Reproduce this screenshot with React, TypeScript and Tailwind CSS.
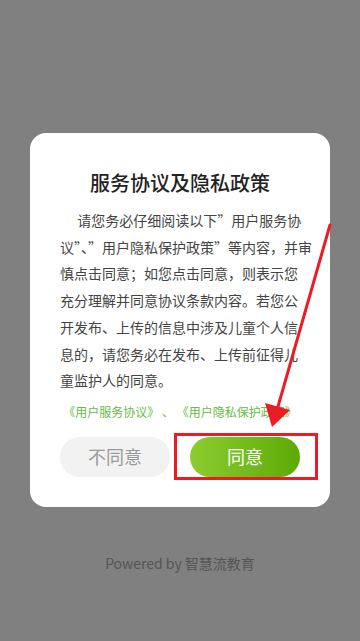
import React from 'react';

const LINES = [
  '\u3000 请您务必仔细阅读以下”用户服务协',
  '议”、”用户隐私保护政策”等内容，并审',
  '慎点击同意；如您点击同意，则表示您',
  '充分理解并同意协议条款内容。若您公',
  '开发布、上传的信息中涉及儿童个人信',
  '息的，请您务必在发布、上传前征得儿',
  '童监护人的同意。',
];

const App: React.FC = () => {
  return (
    <div
      className="relative w-[360px] h-[641px] bg-[#808080] overflow-hidden flex flex-col items-center pt-[133px]"
      style={{ fontFamily: '"Noto Sans CJK SC", "Noto Sans", sans-serif' }}
    >
      <div className="w-[300px] bg-white rounded-[16px] flex flex-col items-center pt-[36px] pb-[30px]">
        <h1 className="text-[20px] leading-[28px] font-medium text-[#222]">服务协议及隐私政策</h1>
        <div className="mt-[10px] w-[240px] text-[14px] leading-[26.7px] text-[#444] whitespace-nowrap">
          {LINES.map((line, i) => (
            <div key={i}>{line}</div>
          ))}
        </div>
        <p className="mt-[9px] text-[12px] leading-[18px] text-[#66bb44] whitespace-nowrap">
          《用户服务协议》 、 《用户隐私保护政策》
        </p>
        <div className="mt-[16px] w-[240px] flex justify-between">
          <button className="w-[110px] h-[40px] rounded-full bg-[#f2f2f2] text-[18px] text-[#9a9a9a]">不同意</button>
          <button className="w-[110px] h-[40px] rounded-full bg-gradient-to-r from-[#8ccc2e] to-[#5daa02] text-[18px] text-white">同意</button>
        </div>
      </div>
      <p className="mt-[47px] text-[14px] leading-[18px] text-[#555]">Powered by 智慧流教育</p>

      <svg className="absolute left-0 top-0 pointer-events-none" width="360" height="641" viewBox="0 0 360 641">
        <rect x="175.5" y="434.5" width="141" height="44" fill="none" stroke="#ec1c24" strokeWidth="3" />
        <line x1="330" y1="225" x2="277" y2="410" stroke="#ec1c24" strokeWidth="3" strokeLinecap="round" />
        <polygon points="272,427 265,403 290,410" fill="#ec1c24" />
      </svg>
    </div>
  );
};

export default App;
